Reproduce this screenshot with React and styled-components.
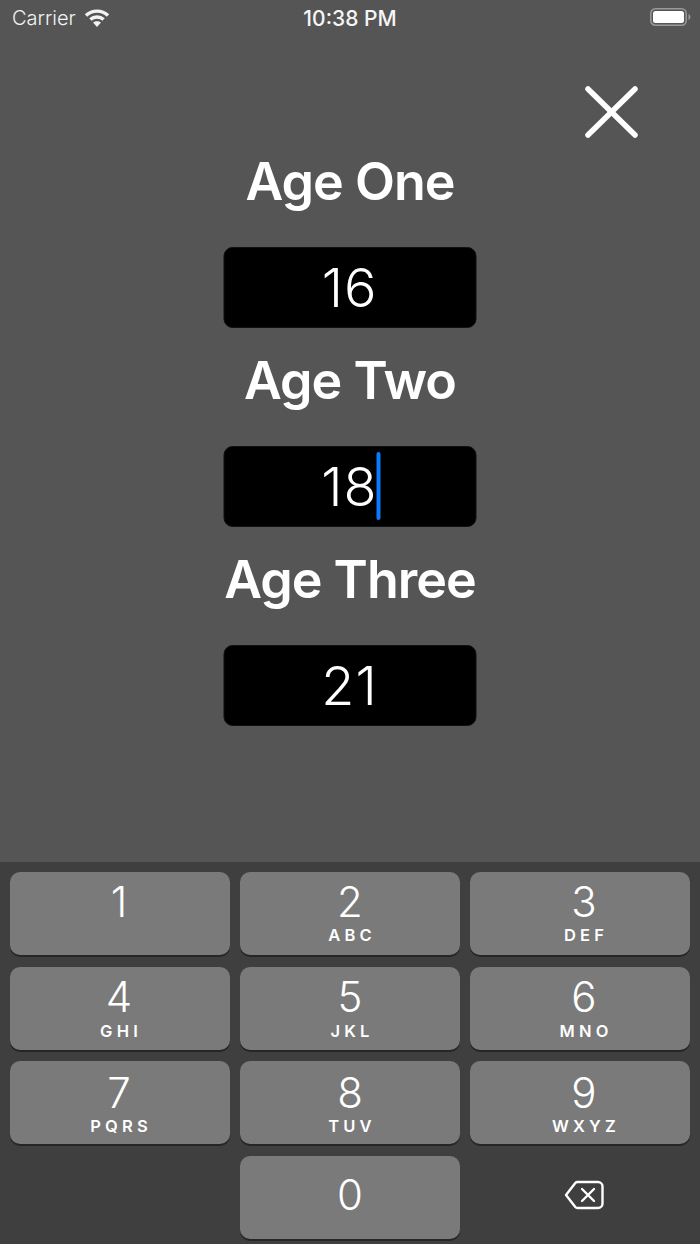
import React from 'react';
import styled, { createGlobalStyle } from 'styled-components';

const GlobalStyle = createGlobalStyle`
  html, body {
    margin: 0;
    padding: 0;
    background: #555555;
  }
`;

const Page = styled.div`
  position: relative;
  width: 700px;
  height: 1244px;
  overflow: hidden;
  display: flex;
  flex-direction: column;
  background: #555555;
  color: #fff;
  font-family: Inter, "Liberation Sans", sans-serif;
`;

const StatusBar = styled.div`
  height: 36px;
  padding: 0 12px;
  display: grid;
  grid-template-columns: 1fr auto 1fr;
  align-items: center;
`;

const Carrier = styled.div`
  display: flex;
  align-items: center;
  gap: 8px;
  font-size: 20px;
  font-weight: 300;
  color: #f2f2f2;
`;

const Clock = styled.div`
  font-weight: 500;
  font-size: 21px;
  color: #f5f5f5;
`;

const BatteryWrap = styled.div`
  justify-self: end;
  display: flex;
  margin-right: -3px;
`;

const CloseButton = styled.div`
  position: absolute;
  left: 584px;
  top: 85px;
  width: 55px;
  height: 54px;
`;

const Form = styled.div`
  margin-top: 93px;
  display: flex;
  flex-direction: column;
  align-items: center;
`;

const Label = styled.div`
  height: 118px;
  display: flex;
  align-items: center;
  padding-bottom: 13px;
  box-sizing: border-box;
  font-size: 52px;
  font-weight: 600;
  letter-spacing: -1px;
`;

const Field = styled.div`
  width: 253px;
  height: 81px;
  box-sizing: border-box;
  border: 1px solid #111;
  border-radius: 9px;
  background: #000;
  display: flex;
  align-items: center;
  justify-content: center;
  font-size: 54px;
  font-weight: 300;
  letter-spacing: 1px;
  position: relative;
  transform: translateX(-0.5px);
`;

const Caret = styled.span`
  position: absolute;
  left: 152.5px;
  top: 5px;
  width: 3.5px;
  height: 68px;
  border-radius: 2px;
  background: #0a7aff;
`;

const Keyboard = styled.div`
  margin-top: auto;
  height: 382px;
  box-sizing: border-box;
  padding: 10px 10px 5px;
  background: #3f3f3f;
  display: grid;
  grid-template-columns: repeat(3, 220px);
  grid-auto-rows: 83px;
  column-gap: 10px;
  row-gap: 11.67px;
`;

const Key = styled.div`
  box-sizing: border-box;
  border-radius: 10px;
  background: #7a7a7a;
  box-shadow: 0 2px 0 #262626;
  display: flex;
  flex-direction: column;
  align-items: center;
  padding-top: ${({ $row }) => $row || 0}px;
  padding-left: ${({ $column }) => ($column === 2 ? '8px' : '0')};
  padding-right: ${({ $column }) => ($column === 0 ? '2px' : '0')};
`;

const Digit = styled.div`
  height: 59px;
  flex-shrink: 0;
  display: flex;
  align-items: center;
  font-size: 42px;
  font-weight: 300;
  line-height: 1;
`;

const ZeroDigit = styled(Digit)`
  height: 79px;
`;

const Letters = styled.div`
  margin-top: -4px;
  margin-right: -4px;
  font-size: 16.5px;
  font-weight: 600;
  letter-spacing: 4.2px;
  line-height: 16px;
`;

const Blank = styled.div``;

const DeleteKey = styled.div`
  display: flex;
  align-items: center;
  justify-content: center;
  padding: 0 0 5px 8px;
`;

const keys = [
  ['1', ''],
  ['2', 'ABC'],
  ['3', 'DEF'],
  ['4', 'GHI'],
  ['5', 'JKL'],
  ['6', 'MNO'],
  ['7', 'PQRS'],
  ['8', 'TUV'],
  ['9', 'WXYZ'],
];

const WifiIcon = () => (
  <svg width="26" height="20" viewBox="0 0 26 20" fill="none" stroke="#f2f2f2" strokeWidth="3.4">
    <path d="M2 7.500C8 1.600 18 1.600 24 7.500" />
    <path d="M6.400 11.600C10 8.200 16 8.200 19.600 11.600" />
    <path d="M9 14.600c2.300-1.900 5.700-1.900 8 0l-4 4.400z" fill="#f2f2f2" stroke="none" />
  </svg>
);

const BatteryIcon = () => (
  <svg width="41" height="20" viewBox="0 0 41 20">
    <rect x="0.8" y="0.8" width="35.400" height="16.400" rx="4.500" fill="none" stroke="#9a9a9a" strokeWidth="1.500" />
    <rect x="3" y="3" width="31" height="12" rx="2.500" fill="#fff" />
    <path d="M38.500 6v6c1.200-.4 1.800-1.600 1.800-3s-.6-2.600-1.800-3z" fill="#9a9a9a" />
  </svg>
);

const CloseIcon = () => (
  <svg width="55" height="54" viewBox="0 0 55 54" fill="none" stroke="#fff" strokeWidth="5.500" strokeLinecap="round">
    <path d="M4 4L51 50" />
    <path d="M51 4L4 50" />
  </svg>
);

const DeleteIcon = () => (
  <svg width="40" height="30" viewBox="0 0 40 30" fill="none" stroke="#fff" strokeWidth="2.400" strokeLinejoin="round" strokeLinecap="round">
    <path d="M13.500 2H34a4.500 4.500 0 0 1 4.500 4.500v17a4.500 4.500 0 0 1-4.500 4.500H13.500a3 3 0 0 1-2.200-1L2 15l9.300-12a3 3 0 0 1 2.200-1z" />
    <path d="M18 9l12 12M30 9L18 21" />
  </svg>
);

const App = () => {
  return (
    <Page>
      <GlobalStyle />
      <StatusBar>
        <Carrier>
          Carrier
          <WifiIcon />
        </Carrier>
        <Clock>10:38 PM</Clock>
        <BatteryWrap>
          <BatteryIcon />
        </BatteryWrap>
      </StatusBar>

      <CloseButton>
        <CloseIcon />
      </CloseButton>

      <Form>
        <Label>Age One</Label>
        <Field>16</Field>
        <Label>Age Two</Label>
        <Field>
          18
          <Caret />
        </Field>
        <Label>Age Three</Label>
        <Field>21</Field>
      </Form>

      <Keyboard>
        {keys.map(([digit, letters], index) => (
          <Key key={digit} $column={index % 3} $row={Math.floor(index / 3)}>
            <Digit>{digit}</Digit>
            {letters && <Letters>{letters}</Letters>}
          </Key>
        ))}
        <Blank />
        <Key $column={1}>
          <ZeroDigit>0</ZeroDigit>
        </Key>
        <DeleteKey>
          <DeleteIcon />
        </DeleteKey>
      </Keyboard>
    </Page>
  );
};

export default App;
